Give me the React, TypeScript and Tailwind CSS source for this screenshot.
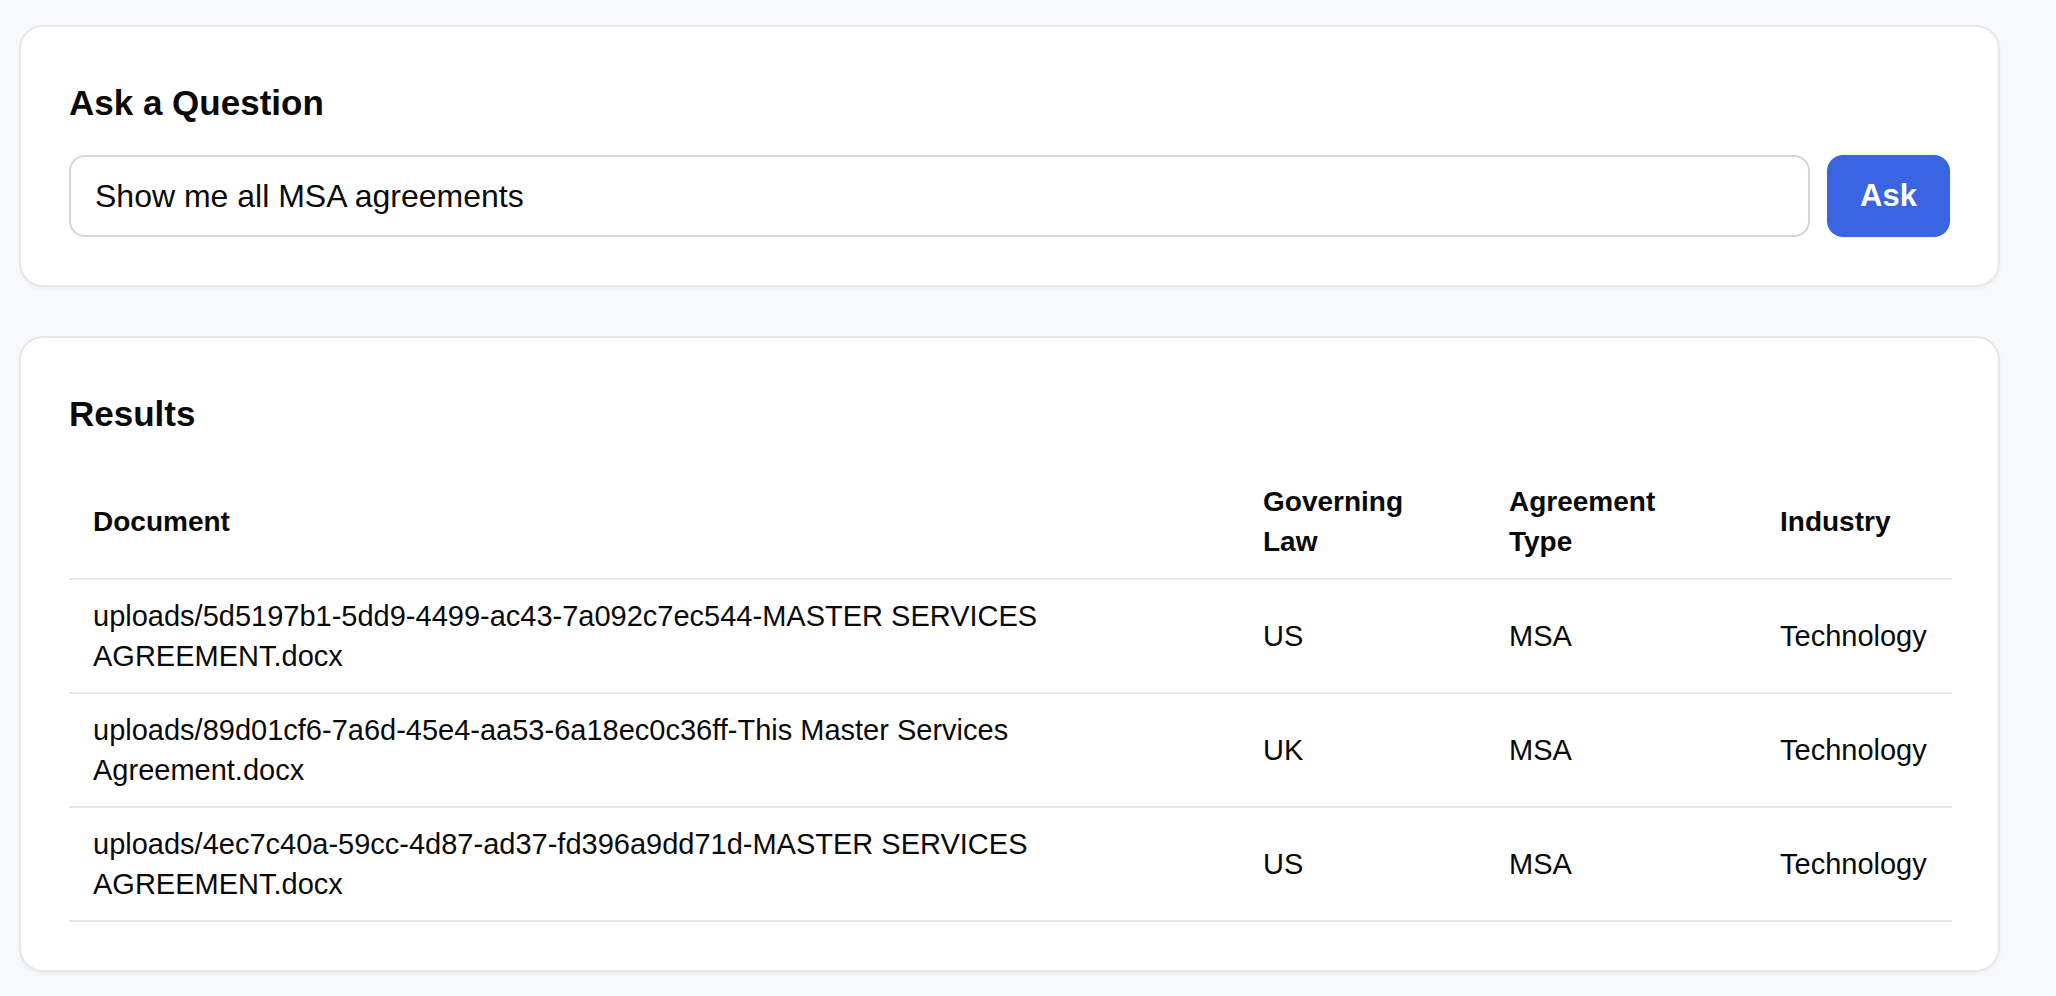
import React from "react";

const rows = [
  {
    doc: ["uploads/5d5197b1-5dd9-4499-ac43-7a092c7ec544-MASTER SERVICES", "AGREEMENT.docx"],
    law: "US",
    type: "MSA",
    industry: "Technology",
  },
  {
    doc: ["uploads/89d01cf6-7a6d-45e4-aa53-6a18ec0c36ff-This Master Services", "Agreement.docx"],
    law: "UK",
    type: "MSA",
    industry: "Technology",
  },
  {
    doc: ["uploads/4ec7c40a-59cc-4d87-ad37-fd396a9dd71d-MASTER SERVICES", "AGREEMENT.docx"],
    law: "US",
    type: "MSA",
    industry: "Technology",
  },
];

export default function App() {
  return (
    <div
      className="min-h-screen w-full bg-[#f8f9fb] text-[#0a0a0a]"
      style={{ fontFamily: '"Liberation Sans", Arial, sans-serif' }}
    >
      <div className="ml-[19px] w-[1981px] pt-[25px] pb-[24px] flex flex-col gap-[49px]">
        <section className="bg-white border-2 border-[#e6e7eb] rounded-[24px] shadow-[0_2px_4px_rgba(0,0,0,0.04)] p-[48px]">
          <h2 className="text-[35px] leading-[56px] font-bold mb-[24px]">Ask a Question</h2>
          <div className="flex gap-[17px] h-[82px]">
            <input
              className="flex-1 h-full border-2 border-[#d3d5da] rounded-[16px] px-[24px] text-[32px] leading-[48px] text-[#0a0a0a] outline-none bg-white"
              defaultValue="Show me all MSA agreements"
              style={{ fontFamily: '"Liberation Sans", Arial, sans-serif' }}
            />
            <button className="h-full w-[123px] rounded-[16px] bg-[#3964e2] text-white text-[31px] font-bold">
              Ask
            </button>
          </div>
        </section>

        <section className="bg-white border-2 border-[#e6e7eb] rounded-[24px] shadow-[0_2px_4px_rgba(0,0,0,0.04)] p-[48px]">
          <h2 className="text-[35px] leading-[56px] font-bold mb-[24px]">Results</h2>
          <table className="w-[1883px] table-fixed border-collapse text-[29px] leading-[40px]">
            <colgroup>
              <col className="w-[1170px]" />
              <col className="w-[246px]" />
              <col className="w-[271px]" />
              <col className="w-[196px]" />
            </colgroup>
            <thead>
              <tr className="border-b-2 border-[#e6e6eb] text-[28px]">
                <th className="text-left font-bold px-[24px] py-[16px] align-middle">Document</th>
                <th className="text-left font-bold px-[24px] py-[16px] align-middle">
                  <div className="w-min">Governing Law</div>
                </th>
                <th className="text-left font-bold px-[24px] py-[16px] align-middle">
                  <div className="w-min">Agreement Type</div>
                </th>
                <th className="text-left font-bold px-[24px] py-[16px] align-middle">Industry</th>
              </tr>
            </thead>
            <tbody>
              {rows.map((r, i) => (
                <tr key={i} className="border-b-2 border-[#e6e6eb]">
                  <td className="px-[24px] py-[16px] align-middle">
                    {r.doc[0]}
                    <br />
                    {r.doc[1]}
                  </td>
                  <td className="px-[24px] py-[16px] align-middle">{r.law}</td>
                  <td className="px-[24px] py-[16px] align-middle">{r.type}</td>
                  <td className="px-[24px] py-[16px] align-middle">{r.industry}</td>
                </tr>
              ))}
            </tbody>
          </table>
        </section>
      </div>
    </div>
  );
}
